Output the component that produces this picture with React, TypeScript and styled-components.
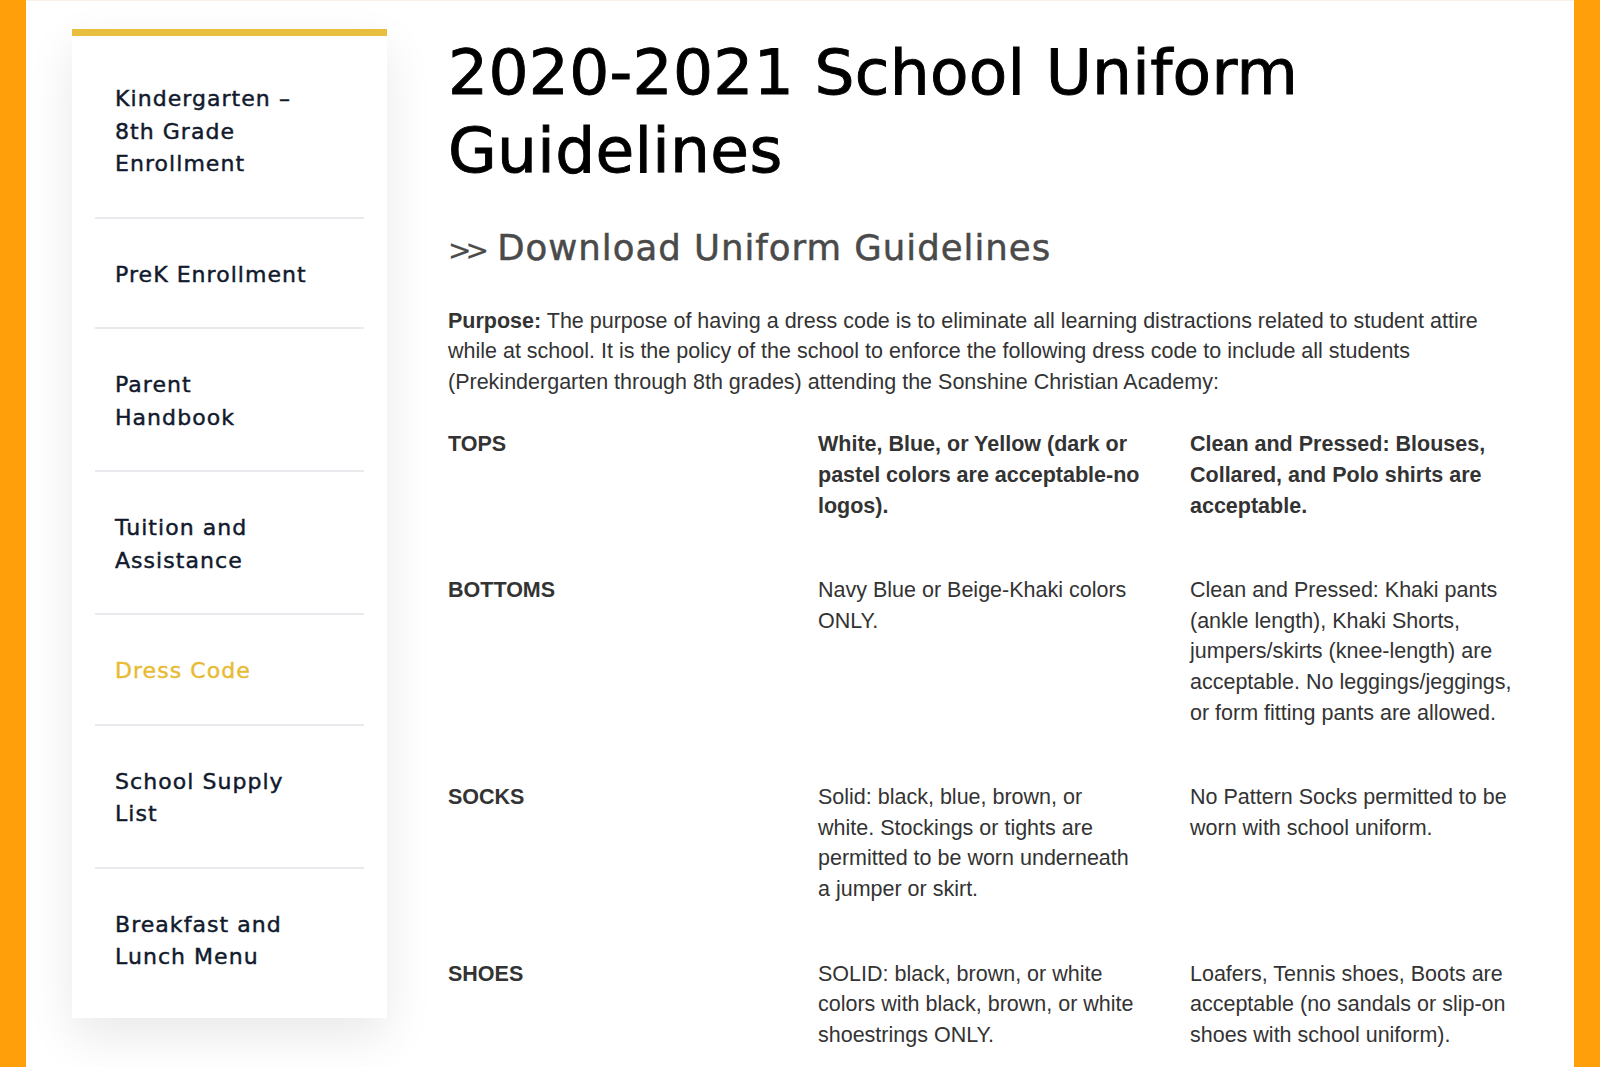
import React from "react";
import styled, { createGlobalStyle } from "styled-components";

const GlobalStyle = createGlobalStyle`
  html, body {
    margin: 0;
    padding: 0;
    background: #ffffff;
  }
  * { box-sizing: border-box; }
`;

const Frame = styled.div`
  min-height: 100vh;
  border-left: 26px solid #ffa00b;
  border-right: 26px solid #ffa00b;
  background: #ffffff;
`;

const Inner = styled.div`
  border-top: 1px solid #fdf1e5;
  display: flex;
  align-items: flex-start;
  gap: 61px;
  padding: 28px 0 0 46px;
`;

const SideCard = styled.nav`
  width: 315px;
  flex: 0 0 315px;
  background: #ffffff;
  border-top: 7px solid #e8be3e;
  padding: 7px 23px 8px;
  box-shadow: 0 18px 45px rgba(0, 0, 0, 0.09);
`;

const NavItem = styled.a<{ $active?: boolean; $last?: boolean }>`
  display: block;
  padding: 40px 0 36px 20px;
  border-bottom: ${(p) => (p.$last ? "none" : "2px solid #e9e9ee")};
  font-family: "DejaVu Sans", "Noto Sans", sans-serif;
  font-size: 22px;
  line-height: 32.5px;
  letter-spacing: 1.05px;
  -webkit-text-stroke: 0.45px currentColor;
  color: ${(p) => (p.$active ? "#e8bb34" : "#111a2d")};
  text-decoration: none;
`;

const NavLabel = styled.span`
  display: block;
  max-width: 202px;
`;

const Main = styled.main`
  width: 1072px;
  flex: 0 0 1072px;
`;

const Title = styled.h1`
  margin: 5px 0 0;
  font-family: "DejaVu Sans", "Noto Sans", sans-serif;
  font-weight: 400;
  font-size: 63px;
  line-height: 78px;
  color: #000000;
  letter-spacing: 0.3px;
  -webkit-text-stroke: 0.9px currentColor;
`;

const DownloadLink = styled.h2`
  margin: 37px 0 0;
  font-family: "DejaVu Sans", "Noto Sans", sans-serif;
  font-weight: 400;
  font-size: 35.5px;
  line-height: 42.6px;
  letter-spacing: 1px;
  color: #4a4a4a;
  -webkit-text-stroke: 0.5px currentColor;
`;

const Arrows = styled.span`
  font-size: 28px;
  letter-spacing: -6px;
  margin-right: 2px;
  -webkit-text-stroke: 0.2px currentColor;
`;

const Paragraph = styled.p`
  margin: 33px 0 0;
  font-family: "Liberation Sans", Arial, sans-serif;
  font-size: 21.5px;
  line-height: 30.6px;
  color: #333333;
`;

const Table = styled.div`
  margin-top: 32px;
  display: grid;
  grid-template-columns: 370px 372px 1fr;
  row-gap: 54px;
  font-family: "Liberation Sans", Arial, sans-serif;
  font-size: 21.5px;
  line-height: 30.6px;
  color: #333333;
`;

const Cell = styled.div<{ $bold?: boolean; $pad?: number }>`
  font-weight: ${(p) => (p.$bold ? 700 : 400)};
  padding-right: ${(p) => p.$pad ?? 0}px;
`;

const navItems = [
  "Kindergarten – 8th Grade Enrollment",
  "PreK Enrollment",
  "Parent Handbook",
  "Tuition and Assistance",
  "Dress Code",
  "School Supply List",
  "Breakfast and Lunch Menu",
];

const rows: { label: string; a: string; b: string; bold?: boolean }[] = [
  {
    label: "TOPS",
    a: "White, Blue, or Yellow (dark or pastel colors are acceptable-no logos).",
    b: "Clean and Pressed: Blouses, Collared, and Polo shirts are acceptable.",
    bold: true,
  },
  {
    label: "BOTTOMS",
    a: "Navy Blue or Beige-Khaki colors ONLY.",
    b: "Clean and Pressed: Khaki pants (ankle length), Khaki Shorts, jumpers/skirts (knee-length) are acceptable. No leggings/jeggings, or form fitting pants are allowed.",
  },
  {
    label: "SOCKS",
    a: "Solid: black, blue, brown, or white. Stockings or tights are permitted to be worn underneath a jumper or skirt.",
    b: "No Pattern Socks permitted to be worn with school uniform.",
  },
  {
    label: "SHOES",
    a: "SOLID: black, brown, or white colors with black, brown, or white shoestrings ONLY.",
    b: "Loafers, Tennis shoes, Boots are acceptable (no sandals or slip-on shoes with school uniform).",
  },
];

export default function App() {
  return (
    <>
      <GlobalStyle />
      <Frame>
        <Inner>
          <SideCard>
            {navItems.map((item, i) => (
              <NavItem
                key={item}
                href="#"
                $active={item === "Dress Code"}
                $last={i === navItems.length - 1}
              >
                <NavLabel>{item}</NavLabel>
              </NavItem>
            ))}
          </SideCard>
          <Main>
            <Title>2020-2021 School Uniform Guidelines</Title>
            <DownloadLink>
              <Arrows>&gt;&gt;</Arrows> Download Uniform Guidelines
            </DownloadLink>
            <Paragraph>
              <strong>Purpose:</strong> The purpose of having a dress code is to eliminate all
              learning distractions related to student attire while at school. It is the policy of
              the school to enforce the following dress code to include all students
              (Prekindergarten through 8th grades) attending the Sonshine Christian Academy:
            </Paragraph>
            <Table>
              {rows.map((r) => (
                <React.Fragment key={r.label}>
                  <Cell $bold>{r.label}</Cell>
                  <Cell $bold={r.bold} $pad={48}>
                    {r.a}
                  </Cell>
                  <Cell $bold={r.bold}>{r.b}</Cell>
                </React.Fragment>
              ))}
            </Table>
          </Main>
        </Inner>
      </Frame>
    </>
  );
}
